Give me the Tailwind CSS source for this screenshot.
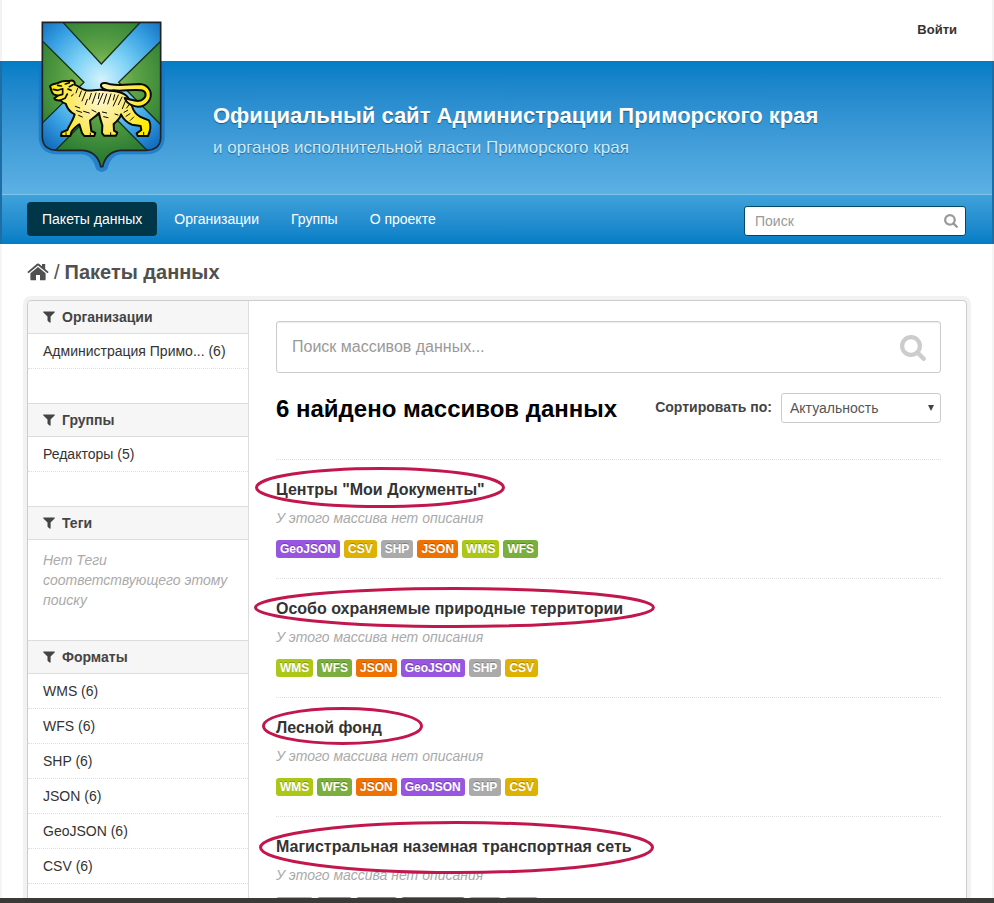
<!DOCTYPE html>
<html lang="ru">
<head>
<meta charset="utf-8">
<title>Пакеты данных</title>
<script src="https://cdn.jsdelivr.net/npm/@tailwindcss/browser@4"></script>
</head>
<body class="flex h-screen flex-col overflow-hidden bg-white font-['Liberation_Sans',Arial,sans-serif] text-sm leading-5 text-[#444]">
<svg class="hidden" aria-hidden="true">
  <symbol id="filter" viewBox="0 0 12 12"><path d="M.6.5h10.800c.5 0 .7.500.4.800L7.600 5.600v5.700c0 .400-.4.600-.7.400L4.800 9.900a.8.8 0 0 1-.3-.6V5.600L.2 1.300C-.1 1 .1.500.6.500Z" fill="currentColor"/></symbol>
  <symbol id="search" viewBox="0 0 26 26"><circle cx="11" cy="11" r="8.900" fill="none" stroke="currentColor" stroke-width="4.200"/><path d="m17.500 17.500 6.200 6.200" stroke="currentColor" stroke-width="4.400" stroke-linecap="round"/></symbol>
</svg>

<div class="flex min-h-0 flex-1 flex-col overflow-hidden">
  <header class="relative shrink-0">
    <div class="flex h-[61px] items-center justify-end border-x-2 border-[#f3f3f3] px-[35px] pb-0.5">
      <a href="#" class="text-[13px] font-bold text-[#333]">Войти</a>
    </div>
    <div class="border-x-2 border-[#1c6ea4]">
      <div class="h-[133px] bg-linear-to-b from-[#007dc5] to-[#5cb1e4] pt-[41px] pl-[211px] [text-shadow:0_1px_1px_rgba(0,60,100,0.6)]">
        <h1 class="text-[22px] leading-7 font-bold text-white">Официальный сайт Администрации Приморского края</h1>
        <p class="mt-1 text-[17px] leading-7 text-[#cdeaf9]">и органов исполнительной власти Приморского края</p>
      </div>
      <nav class="flex h-[50px] items-center justify-between border-t border-[#7fc2ea] bg-linear-to-b from-[#3ea2db] to-[#007dc5] px-[25px] pb-px">
        <div class="flex gap-0.5">
          <a href="#" class="rounded bg-[#003647] px-[15px] py-[7px] text-white">Пакеты данных</a>
          <a href="#" class="px-[15px] py-[7px] text-white">Организации</a>
          <a href="#" class="px-[15px] py-[7px] text-white">Группы</a>
          <a href="#" class="px-[15px] py-[7px] text-white">О проекте</a>
        </div>
        <form class="relative mt-1 mr-px w-[222px]">
          <input type="search" aria-label="Поиск" placeholder="Поиск" class="block h-[30px] w-full rounded-[3px] border border-[#004a61] bg-white pr-8 pl-2.5 text-sm placeholder:text-[#999]">
          <button type="button" aria-label="Найти" class="absolute top-2 right-2 text-[#999]"><svg class="size-[14px]"><use href="#search"/></svg></button>
        </form>
      </nav>
    </div>
    <a href="#" aria-label="Приморский край" class="absolute top-2.5 left-[30px]">
      <svg width="145" height="170" viewBox="0 0 435 510">
        <defs>
          <radialGradient id="green" gradientUnits="userSpaceOnUse" cx="214" cy="215" r="225"><stop offset="0" stop-color="#a5cf6e"/><stop offset=".45" stop-color="#5fa447"/><stop offset="1" stop-color="#2c7d33"/></radialGradient>
          <radialGradient id="blue" gradientUnits="userSpaceOnUse" cx="214" cy="210" r="250"><stop offset="0" stop-color="#d4f3fd"/><stop offset=".35" stop-color="#7fd3f6"/><stop offset=".72" stop-color="#369fe2"/><stop offset="1" stop-color="#1670c0"/></radialGradient>
          <radialGradient id="gold" gradientUnits="userSpaceOnUse" cx="210" cy="270" r="155"><stop offset="0" stop-color="#fff8cf"/><stop offset=".5" stop-color="#fbea78"/><stop offset="1" stop-color="#ffed00"/></radialGradient>
          <clipPath id="shield"><path d="M37 37H392V384Q390 420 348 421H272Q228 425 218 470H212Q203 425 158 421H82Q40 420 37 384Z"/></clipPath>
        </defs>
        <path d="M26 153H404V386Q400 430 352 433H274Q242 436 232 478Q215 494 198 478Q188 436 156 433H80Q30 430 26 386Z" fill="#1976c4" opacity=".75"/>
        <g clip-path="url(#shield)">
          <path d="M30 30H400V480H30Z" fill="url(#blue)"/>
          <g fill="url(#green)" stroke="#17301d" stroke-width="4">
            <path d="M98 36 214 162 332 36Z"/>
            <path d="M34 90 162 217 34 342Z"/>
            <path d="M396 90 266 217 396 348Z"/>
            <path d="M74 424 214 282 354 424 214 500Z"/>
          </g>
        </g>
        <path d="M37 37H392V384Q390 420 348 421H272Q228 425 218 470H212Q203 425 158 421H82Q40 420 37 384Z" fill="none" stroke="#1f2324" stroke-width="5"/>
        <g stroke="#090900" stroke-linecap="round" stroke-linejoin="round">
          <path d="M60 229C66 219 79 223 88 217C100 210 111 214 118 213C130 209 136 215 134 224C148 229 153 238 165 240C182 246 199 236 220 240C248 243 278 244 291 259C301 271 304 284 310 299C318 315 330 321 339 324L357 331C364 346 361 363 354 378H323L320 370L334 360L332 348L306 344C290 337 280 328 273 313C271 325 262 333 251 342L252 362L262 368L258 377H222L216 369L217 346C213 334 209 321 207 309C197 321 184 326 180 332L184 363L196 369L193 378H163L156 369L148 343C138 348 131 357 125 364L121 378H93L95 367L112 360C119 343 130 330 134 313C118 306 110 290 107 281C101 280 96 276 91 271C80 272 75 270 73 265L83 257L71 253C61 247 66 237 60 229Z" fill="url(#gold)" stroke-width="6"/>
          <path d="M284 264C305 270 330 279 341 266C352 254 346 243 334 241C307 237 277 245 251 241C229 243 211 235 213 224C217 215 230 219 241 223C272 229 300 222 329 222C352 223 365 241 362 260C357 284 331 296 309 287C297 283 288 276 284 264Z" fill="url(#gold)" stroke-width="6"/>
          <path d="M70 238 83 241 98 236 98 253 83 257 M91 271 105 265 112 252 M83 226 94 228 M106 222 118 218 M118 230 129 224 M114 237 123 241" fill="none" stroke-width="5"/>
          <path d="M143 235 138 249 M154 243 148 260 M167 246 156 273 M172 268 166 284 M184 250 178 268 M198 249 187 280 M208 250 205 266 M219 250 204 284 M230 252 221 280 M243 252 233 282 M254 254 250 270 M265 255 250 288 M276 261 265 284 M287 271 277 296 M297 284 290 294 M136 289 149 294 M140 302 155 307 M146 316 157 321 M161 304 178 309 M186 300 198 306 M217 306 230 309 M221 320 234 323 M255 312 264 315 M282 307 293 301 M288 319 300 311 M301 331 311 321 M124 258 130 253" fill="none" stroke-width="3"/>
          <path d="M108 374V368M242 374V368M181 374V369M341 374V367" stroke-width="3"/>
        </g>
      </svg>
    </a>
  </header>

  <main class="min-h-0 flex-1 border-x-2 border-[#f5f5f5] px-[25px] pt-4">
    <div class="flex h-6 items-center gap-[5px] text-xl text-[#505050]">
      <a href="#" aria-label="Главная"><svg width="22" height="18" viewBox="0 0 22 18" fill="currentColor"><path d="M11 3.900 18.600 10.200V16.400q0 .9-.9.900H13V12H9v5.300H4.300q-.9 0-.9-.9V10.200Z"/><path d="M10 .8q1-.8 2 0l3 2.500V1h3.200v5l3.500 2.900-1.200 1.400L11 2.400 1.500 10.300.3 8.900Z"/></svg></a>
      <span>/</span>
      <a href="#" class="font-bold">Пакеты данных</a>
    </div>

    <div class="mt-4 flex min-h-[700px] rounded border border-[#ccc] bg-white shadow-[0_0_0_4px_#f2f2f2]">
      <aside class="w-[221px] shrink-0 border-r border-[#ddd]">
        <section class="pb-[34px]">
          <h2 class="flex items-center gap-[7px] rounded-tl border-b border-[#ddd] bg-[#f6f6f6] px-[15px] py-1.5 font-bold"><svg class="size-3"><use href="#filter"/></svg>Организации</h2>
          <ul><li class="border-b border-dotted border-[#ddd] px-[15px] py-[7px]"><a href="#" class="text-[#333]">Администрация Примо... (6)</a></li></ul>
        </section>
        <section class="pb-[34px]">
          <h2 class="flex items-center gap-[7px] border-y border-[#ddd] bg-[#f6f6f6] px-[15px] py-1.5 font-bold"><svg class="size-3"><use href="#filter"/></svg>Группы</h2>
          <ul><li class="border-b border-dotted border-[#ddd] px-[15px] py-[7px]"><a href="#" class="text-[#333]">Редакторы (5)</a></li></ul>
        </section>
        <section class="pb-[30px]">
          <h2 class="flex items-center gap-[7px] border-y border-[#ddd] bg-[#f6f6f6] px-[15px] py-1.5 font-bold"><svg class="size-3"><use href="#filter"/></svg>Теги</h2>
          <p class="px-[15px] pt-2.5 text-[#aaa] italic">Нет Теги соответствующего этому поиску</p>
        </section>
        <section>
          <h2 class="flex items-center gap-[7px] border-y border-[#ddd] bg-[#f6f6f6] px-[15px] py-1.5 font-bold"><svg class="size-3"><use href="#filter"/></svg>Форматы</h2>
          <ul class="text-[#333]">
            <li class="border-b border-dotted border-[#ddd] px-[15px] py-[7px]"><a href="#">WMS (6)</a></li>
            <li class="border-b border-dotted border-[#ddd] px-[15px] py-[7px]"><a href="#">WFS (6)</a></li>
            <li class="border-b border-dotted border-[#ddd] px-[15px] py-[7px]"><a href="#">SHP (6)</a></li>
            <li class="border-b border-dotted border-[#ddd] px-[15px] py-[7px]"><a href="#">JSON (6)</a></li>
            <li class="border-b border-dotted border-[#ddd] px-[15px] py-[7px]"><a href="#">GeoJSON (6)</a></li>
            <li class="border-b border-dotted border-[#ddd] px-[15px] py-[7px]"><a href="#">CSV (6)</a></li>
          </ul>
        </section>
      </aside>

      <div class="min-w-0 flex-1 pt-5 pr-[25px] pl-[27px]">
        <form>
          <div class="relative">
            <input type="search" aria-label="Поиск массивов данных" placeholder="Поиск массивов данных..." class="block h-[52px] w-full rounded-[3px] border border-[#ccc] bg-white pr-14 pl-[15px] text-base shadow-[inset_0_1px_1px_rgba(0,0,0,0.075)] placeholder:text-[#999]">
            <button type="button" aria-label="Найти" class="absolute top-3.5 right-[15px] text-[#ccc]"><svg class="size-[26px]"><use href="#search"/></svg></button>
          </div>
          <div class="mt-5 flex h-[30px] items-center justify-between">
            <h1 class="pt-0.5 text-2xl font-bold text-black">6 найдено массивов данных</h1>
            <div class="flex items-center gap-[9px]">
              <label for="sort" class="pb-0.5 font-bold">Сортировать по:</label>
              <div class="relative w-40">
                <select id="sort" class="block h-[30px] w-full appearance-none rounded-[3px] border border-[#ccc] bg-white px-2 text-sm text-[#555]"><option>Актуальность</option></select>
                <svg class="pointer-events-none absolute top-3 right-[7px]" width="6" height="6" viewBox="0 0 6 6"><path d="M0 0H6L3 6Z" fill="#444"/></svg>
              </div>
            </div>
          </div>
        </form>

        <ul class="mt-9 text-xs leading-[18px]">
          <li class="relative border-t border-dotted border-[#ddd] py-5">
            <h3 class="text-base leading-5 font-bold text-[#333]"><a href="#">Центры "Мои Документы"</a></h3>
            <p class="mt-2 text-sm leading-5 text-[#aaa] italic">У этого массива нет описания</p>
            <div class="mt-3 flex gap-1 font-bold text-white [text-shadow:0_-1px_0_rgba(0,0,0,0.25)]">
              <a href="#" class="rounded-[3px] bg-[#9855e0] px-1">GeoJSON</a><a href="#" class="rounded-[3px] bg-[#dfb100] px-1">CSV</a><a href="#" class="rounded-[3px] bg-[#aaa] px-1">SHP</a><a href="#" class="rounded-[3px] bg-[#ef7100] px-1">JSON</a><a href="#" class="rounded-[3px] bg-[#adc717] px-1">WMS</a><a href="#" class="rounded-[3px] bg-[#7aae3d] px-1">WFS</a>
            </div>
            <svg class="pointer-events-none absolute top-[7px] -left-[21px]" width="250" height="41"><ellipse cx="125" cy="20.500" rx="123.500" ry="19" fill="none" stroke="#c2174d" stroke-width="3"/></svg>
          </li>
          <li class="relative border-t border-dotted border-[#ddd] py-5">
            <h3 class="text-base leading-5 font-bold text-[#333]"><a href="#">Особо охраняемые природные территории</a></h3>
            <p class="mt-2 text-sm leading-5 text-[#aaa] italic">У этого массива нет описания</p>
            <div class="mt-3 flex gap-1 font-bold text-white [text-shadow:0_-1px_0_rgba(0,0,0,0.25)]">
              <a href="#" class="rounded-[3px] bg-[#adc717] px-1">WMS</a><a href="#" class="rounded-[3px] bg-[#7aae3d] px-1">WFS</a><a href="#" class="rounded-[3px] bg-[#ef7100] px-1">JSON</a><a href="#" class="rounded-[3px] bg-[#9855e0] px-1">GeoJSON</a><a href="#" class="rounded-[3px] bg-[#aaa] px-1">SHP</a><a href="#" class="rounded-[3px] bg-[#dfb100] px-1">CSV</a>
            </div>
            <svg class="pointer-events-none absolute top-2 -left-[22px]" width="401" height="41"><ellipse cx="200.500" cy="20.500" rx="199" ry="19" fill="none" stroke="#c2174d" stroke-width="3"/></svg>
          </li>
          <li class="relative border-t border-dotted border-[#ddd] py-5">
            <h3 class="text-base leading-5 font-bold text-[#333]"><a href="#">Лесной фонд</a></h3>
            <p class="mt-2 text-sm leading-5 text-[#aaa] italic">У этого массива нет описания</p>
            <div class="mt-3 flex gap-1 font-bold text-white [text-shadow:0_-1px_0_rgba(0,0,0,0.25)]">
              <a href="#" class="rounded-[3px] bg-[#adc717] px-1">WMS</a><a href="#" class="rounded-[3px] bg-[#7aae3d] px-1">WFS</a><a href="#" class="rounded-[3px] bg-[#ef7100] px-1">JSON</a><a href="#" class="rounded-[3px] bg-[#9855e0] px-1">GeoJSON</a><a href="#" class="rounded-[3px] bg-[#aaa] px-1">SHP</a><a href="#" class="rounded-[3px] bg-[#dfb100] px-1">CSV</a>
            </div>
            <svg class="pointer-events-none absolute top-[9px] -left-3.5" width="161" height="38"><ellipse cx="80.500" cy="19" rx="79" ry="17.500" fill="none" stroke="#c2174d" stroke-width="3"/></svg>
          </li>
          <li class="relative border-t border-dotted border-[#ddd] py-5">
            <h3 class="text-base leading-5 font-bold text-[#333]"><a href="#">Магистральная наземная транспортная сеть</a></h3>
            <p class="mt-2 text-sm leading-5 text-[#aaa] italic">У этого массива нет описания</p>
            <div class="mt-3 flex gap-1 font-bold text-white [text-shadow:0_-1px_0_rgba(0,0,0,0.25)]">
              <a href="#" class="rounded-[3px] bg-[#adc717] px-1">WMS</a><a href="#" class="rounded-[3px] bg-[#7aae3d] px-1">WFS</a><a href="#" class="rounded-[3px] bg-[#ef7100] px-1">JSON</a><a href="#" class="rounded-[3px] bg-[#9855e0] px-1">GeoJSON</a><a href="#" class="rounded-[3px] bg-[#aaa] px-1">SHP</a><a href="#" class="rounded-[3px] bg-[#dfb100] px-1">CSV</a>
            </div>
            <svg class="pointer-events-none absolute top-1 -left-[17px]" width="395" height="53"><ellipse cx="197.500" cy="26.500" rx="196" ry="25" fill="none" stroke="#c2174d" stroke-width="3"/></svg>
          </li>
        </ul>
      </div>
    </div>
  </main>
</div>
<div class="h-[5px] shrink-0 bg-[#3b3a36]"></div>
</body>
</html>
